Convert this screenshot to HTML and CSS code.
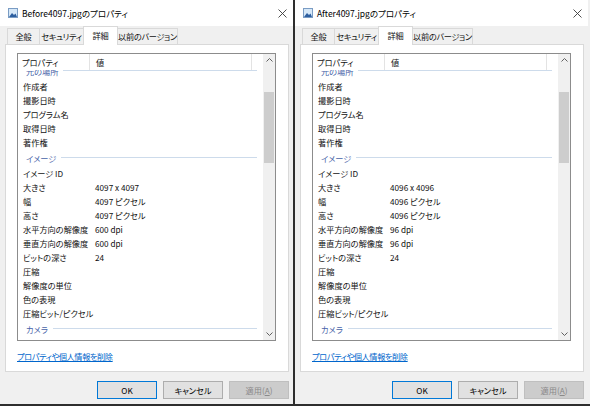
FILE: index.html
```html
<!DOCTYPE html>
<html lang="ja">
<head>
  <meta charset="UTF-8" />
  <title>プロパティ比較</title>
  <link rel="stylesheet" href="styles.css">
</head>
<body>
  <div class="screen">

    <!-- Before -->
    <section class="dialog">
      <div class="titlebar">
        <svg class="file-icon" width="10" height="10" viewBox="0 0 10 10">
          <rect x="0.5" y="0.5" width="9" height="9" fill="#d6e8f8" stroke="#7a9cc4"/>
          <path d="M1 9 L4 5 L6 7 L7.5 5.5 L9 9 Z" fill="#2d5fa0"/>
        </svg>
        <span class="title">Before4097.jpgのプロパティ</span>
        <svg class="close" width="9" height="9" viewBox="0 0 9 9">
          <path d="M0.5 0.5 L8.5 8.5 M8.5 0.5 L0.5 8.5" stroke="#3a3a3a" stroke-width="0.9"/>
        </svg>
      </div>

      <div class="tabs">
        <div class="tab tab-general">全般</div>
        <div class="tab tab-security">セキュリティ</div>
        <div class="tab tab-details active">詳細</div>
        <div class="tab tab-versions">以前のバージョン</div>
      </div>

      <div class="panel">
        <div class="list">
          <div class="list-main">
            <div class="list-head">
              <div class="hcol hcol-prop">プロパティ</div>
              <div class="hcol hcol-val">値</div>
              <div class="hcol hcol-rest"></div>
            </div>
            <div class="list-body">
              <div class="list-scroll">
                <div class="group"><span>元の場所</span></div>
                <div class="row"><span class="k">作成者</span></div>
                <div class="row"><span class="k">撮影日時</span></div>
                <div class="row"><span class="k">プログラム名</span></div>
                <div class="row"><span class="k">取得日時</span></div>
                <div class="row"><span class="k">著作権</span></div>
                <div class="group"><span>イメージ</span></div>
                <div class="row"><span class="k">イメージ ID</span></div>
                <div class="row"><span class="k">大きさ</span><span class="v">4097 x 4097</span></div>
                <div class="row"><span class="k">幅</span><span class="v">4097 ピクセル</span></div>
                <div class="row"><span class="k">高さ</span><span class="v">4097 ピクセル</span></div>
                <div class="row"><span class="k">水平方向の解像度</span><span class="v">600 dpi</span></div>
                <div class="row"><span class="k">垂直方向の解像度</span><span class="v">600 dpi</span></div>
                <div class="row"><span class="k">ビットの深さ</span><span class="v">24</span></div>
                <div class="row"><span class="k">圧縮</span></div>
                <div class="row"><span class="k">解像度の単位</span></div>
                <div class="row"><span class="k">色の表現</span></div>
                <div class="row"><span class="k">圧縮ビット/ピクセル</span></div>
                <div class="group"><span>カメラ</span></div>
                <div class="row"><span class="k">カメラの製造元</span></div>
              </div>
            </div>
          </div>
          <div class="scrollbar">
            <div class="sb-btn">
              <svg width="7" height="4" viewBox="0 0 7 4"><path d="M0.5 3.5 L3.5 0.5 L6.5 3.5" fill="none" stroke="#606060"/></svg>
            </div>
            <div class="sb-track"><div class="sb-thumb"></div></div>
            <div class="sb-btn">
              <svg width="7" height="4" viewBox="0 0 7 4"><path d="M0.5 0.5 L3.5 3.5 L6.5 0.5" fill="none" stroke="#606060"/></svg>
            </div>
          </div>
        </div>
        <a class="remove-link" href="#">プロパティや個人情報を削除</a>
      </div>

      <div class="buttons">
        <button class="btn btn-default">OK</button>
        <button class="btn">キャンセル</button>
        <button class="btn" disabled>適用(<u>A</u>)</button>
      </div>
    </section>

    <!-- After -->
    <section class="dialog">
      <div class="titlebar">
        <svg class="file-icon" width="10" height="10" viewBox="0 0 10 10">
          <rect x="0.5" y="0.5" width="9" height="9" fill="#d6e8f8" stroke="#7a9cc4"/>
          <path d="M1 9 L4 5 L6 7 L7.5 5.5 L9 9 Z" fill="#2d5fa0"/>
        </svg>
        <span class="title">After4097.jpgのプロパティ</span>
        <svg class="close" width="9" height="9" viewBox="0 0 9 9">
          <path d="M0.5 0.5 L8.5 8.5 M8.5 0.5 L0.5 8.5" stroke="#3a3a3a" stroke-width="0.9"/>
        </svg>
      </div>

      <div class="tabs">
        <div class="tab tab-general">全般</div>
        <div class="tab tab-security">セキュリティ</div>
        <div class="tab tab-details active">詳細</div>
        <div class="tab tab-versions">以前のバージョン</div>
      </div>

      <div class="panel">
        <div class="list">
          <div class="list-main">
            <div class="list-head">
              <div class="hcol hcol-prop">プロパティ</div>
              <div class="hcol hcol-val">値</div>
              <div class="hcol hcol-rest"></div>
            </div>
            <div class="list-body">
              <div class="list-scroll">
                <div class="group"><span>元の場所</span></div>
                <div class="row"><span class="k">作成者</span></div>
                <div class="row"><span class="k">撮影日時</span></div>
                <div class="row"><span class="k">プログラム名</span></div>
                <div class="row"><span class="k">取得日時</span></div>
                <div class="row"><span class="k">著作権</span></div>
                <div class="group"><span>イメージ</span></div>
                <div class="row"><span class="k">イメージ ID</span></div>
                <div class="row"><span class="k">大きさ</span><span class="v">4096 x 4096</span></div>
                <div class="row"><span class="k">幅</span><span class="v">4096 ピクセル</span></div>
                <div class="row"><span class="k">高さ</span><span class="v">4096 ピクセル</span></div>
                <div class="row"><span class="k">水平方向の解像度</span><span class="v">96 dpi</span></div>
                <div class="row"><span class="k">垂直方向の解像度</span><span class="v">96 dpi</span></div>
                <div class="row"><span class="k">ビットの深さ</span><span class="v">24</span></div>
                <div class="row"><span class="k">圧縮</span></div>
                <div class="row"><span class="k">解像度の単位</span></div>
                <div class="row"><span class="k">色の表現</span></div>
                <div class="row"><span class="k">圧縮ビット/ピクセル</span></div>
                <div class="group"><span>カメラ</span></div>
                <div class="row"><span class="k">カメラの製造元</span></div>
              </div>
            </div>
          </div>
          <div class="scrollbar">
            <div class="sb-btn">
              <svg width="7" height="4" viewBox="0 0 7 4"><path d="M0.5 3.5 L3.5 0.5 L6.5 3.5" fill="none" stroke="#606060"/></svg>
            </div>
            <div class="sb-track"><div class="sb-thumb"></div></div>
            <div class="sb-btn">
              <svg width="7" height="4" viewBox="0 0 7 4"><path d="M0.5 0.5 L3.5 3.5 L6.5 0.5" fill="none" stroke="#606060"/></svg>
            </div>
          </div>
        </div>
        <a class="remove-link" href="#">プロパティや個人情報を削除</a>
      </div>

      <div class="buttons">
        <button class="btn btn-default">OK</button>
        <button class="btn">キャンセル</button>
        <button class="btn" disabled>適用(<u>A</u>)</button>
      </div>
    </section>

  </div>
</body>
</html>
```

FILE: styles.css
```css
body {
  margin: 0;
  background: #2e2e2e;
  font-family: "Noto Sans CJK JP", "Noto Sans", sans-serif;
  font-size: 8.2px;
  font-feature-settings: "palt";
  color: #111;
}

.screen {
  display: flex;
  gap: 2px;
  width: 590px;
  height: 406px;
  overflow: hidden;
}

.dialog {
  flex: none;
  width: 293px;
  height: 404px;
  background: #f0f0f0;
  overflow: hidden;
}

.dialog:last-child {
  width: 295px;
}

/* title bar */
.titlebar {
  width: 293px;
  height: 26px;
  box-sizing: border-box;
  display: flex;
  align-items: center;
  padding: 0 6px 0 8px;
  background: #fff;
}

.title {
  margin-left: 4px;
  font-size: 8.5px;
  color: #000;
}

.close {
  margin-left: auto;
}

/* tabs */
.tabs {
  display: flex;
  align-items: flex-end;
  height: 18px;
  margin-left: 7px;
}

.tab {
  height: 16px;
  box-sizing: border-box;
  border: 1px solid #d9d9d9;
  border-bottom: none;
  margin-left: -1px;
  line-height: 15px;
  text-align: center;
  white-space: nowrap;
  letter-spacing: -0.3px;
  background: #f0f0f0;
}

.tab:first-child { margin-left: 0; }
.tab-general { width: 33px; }
.tab-security { width: 45px; }
.tab-details { width: 35px; }
.tab-versions { width: 61px; }

.tab.active {
  height: 19px;
  line-height: 17px;
  background: #fff;
  position: relative;
  z-index: 1;
  margin-bottom: -1px;
}

/* tab page */
.panel {
  margin-left: 5px;
  width: 284px;
  height: 328px;
  box-sizing: border-box;
  border: 1px solid #d9d9d9;
  background: #fff;
  padding: 8px 0 0 11px;
}

.list {
  width: 259px;
  height: 288px;
  box-sizing: border-box;
  border: 1px solid #8c8c8c;
  display: flex;
}

.list-main {
  flex: 1;
  min-width: 0;
  display: flex;
  flex-direction: column;
}

.list-head {
  flex: none;
  height: 16px;
  display: flex;
  position: relative;
  z-index: 1;
  background: #fff;
}

.hcol {
  box-sizing: border-box;
  height: 16px;
  line-height: 16px;
  padding-left: 4px;
  border-right: 1px solid #e3e3e3;
}

.hcol-prop { width: 72px; }
.hcol-val { width: 162px; padding-left: 6px; }
.hcol-rest { flex: 1; border-right: none; }

.list-body {
  flex: 1;
  overflow: hidden;
}

.list-scroll {
  margin-top: -8px;
}

.group {
  height: 17px;
  display: flex;
  align-items: center;
  padding: 0 6px 0 8px;
  color: #4763a8;
}

.group::after {
  content: "";
  flex: 1;
  height: 1px;
  margin-left: 5px;
  background: #cddbeb;
}

.row {
  height: 14px;
  display: flex;
  align-items: center;
  padding-left: 5px;
  white-space: nowrap;
}

.k {
  flex: none;
  width: 72px;
}

/* scrollbar */
.scrollbar {
  flex: none;
  width: 12px;
  display: flex;
  flex-direction: column;
  background: #f0f0f0;
}

.sb-btn {
  height: 12px;
  display: flex;
  align-items: center;
  justify-content: center;
}

.sb-track {
  flex: 1;
}

.sb-thumb {
  margin: 26px 1px 0;
  height: 71px;
  background: #cdcdcd;
}

.remove-link {
  display: block;
  width: max-content;
  margin-top: 9px;
  line-height: 12px;
  letter-spacing: -0.4px;
  color: #0066cc;
}

/* buttons */
.buttons {
  display: flex;
  justify-content: flex-end;
  gap: 6px;
  width: 284px;
  margin: 9px 0 0 5px;
}

.btn {
  width: 60px;
  height: 18px;
  padding: 0;
  font: inherit;
  border: 1px solid #adadad;
  background: #e1e1e1;
  color: #000;
}

.btn-default {
  border-color: #0078d7;
}

.btn:disabled {
  background: #cccccc;
  border-color: #bfbfbf;
  color: #8a8a8a;
}
```
